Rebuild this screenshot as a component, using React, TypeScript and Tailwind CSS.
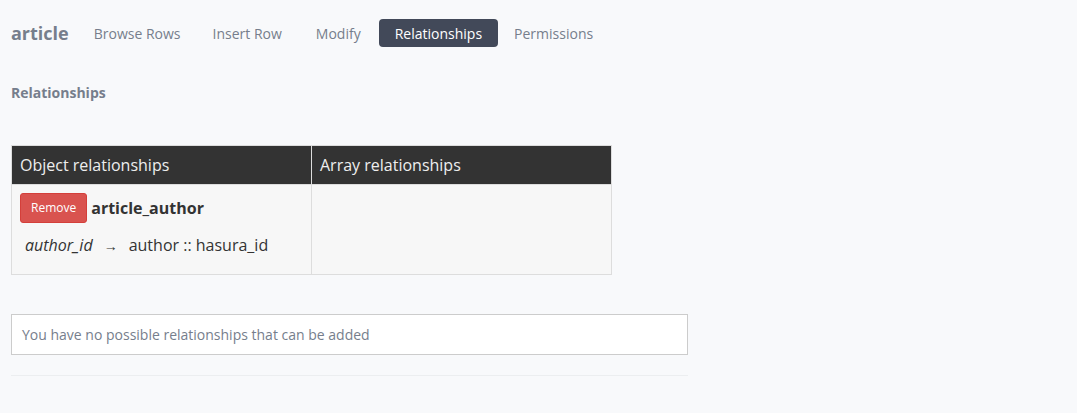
export default function App() {
  const tabs = ["Browse Rows", "Insert Row", "Modify", "Relationships", "Permissions"];

  return (
    <div
      className="min-h-[413px] w-full bg-[#f8f9fb] pl-[11px] pt-[19px]"
      style={{ fontFamily: '"Open Sans", "Noto Sans", sans-serif' }}
    >
      <div className="flex h-[28px] items-center">
        <span className="mr-[9px] text-[18px] font-bold text-[#767e8c]">article</span>
        {tabs.map((t) => (
          <span
            key={t}
            className={
              t === "Relationships"
                ? "ml-[2px] flex h-[28px] items-center rounded-[4px] bg-[#424959] px-[16px] text-[14px] text-white"
                : t === "Modify"
                  ? "ml-[2px] flex h-[28px] items-center px-[16px] text-[14px] text-[#767e8c]"
                  : "flex h-[28px] items-center px-[16px] text-[14px] text-[#767e8c]"
            }
          >
            {t}
          </span>
        ))}
      </div>

      <h4 className="mt-[36px] text-[14px] font-bold leading-[20px] text-[#767e8c]">Relationships</h4>

      <table className="mt-[42px] w-[601px] border-collapse text-[16px] text-[#333]">
        <thead>
          <tr className="h-[39px] bg-[#333333] text-left text-[#eeeeee]">
            <th className="w-[300px] border border-[#dddddd] px-[8px] font-normal">Object relationships</th>
            <th className="border border-[#dddddd] px-[8px] font-normal">Array relationships</th>
          </tr>
        </thead>
        <tbody>
          <tr className="h-[90px] bg-[#f7f7f7] align-top">
            <td className="border border-[#dddddd] px-[8px] pt-[8px]">
              <div className="flex items-center">
                <button className="mr-[4px] h-[30px] rounded-[3px] border border-[#d43f3a] bg-[#d9534f] px-[10px] text-[12px] text-white">
                  Remove
                </button>
                <span className="font-bold text-[#333]">article_author</span>
              </div>
              <div className="mt-[10px] pl-[5px] leading-[24px]">
                <i>author_id</i>
                <span className="mx-[11px] text-[14px]">→</span>
                <span>author :: hasura_id</span>
              </div>
            </td>
            <td className="border border-[#dddddd]"></td>
          </tr>
        </tbody>
      </table>

      <div className="mt-[39px] w-[677px] border border-[#cccccc] bg-white px-[10px] py-[9.5px] text-[14px] leading-[20px] text-[#767e8c]">
        You have no possible relationships that can be added
      </div>

      <hr className="mt-[20px] w-[677px] border-t border-[#eceef0]" />
    </div>
  );
}
